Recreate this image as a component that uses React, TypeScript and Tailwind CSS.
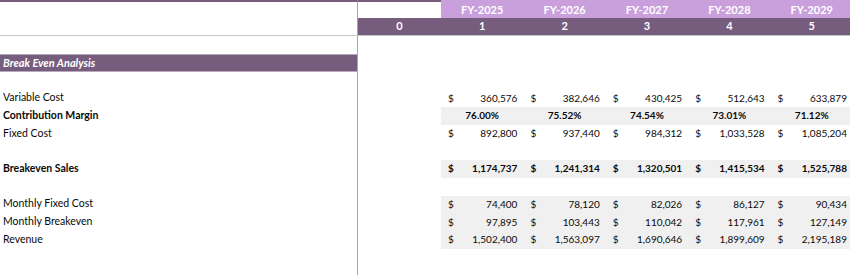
const years = ["FY-2025", "FY-2026", "FY-2027", "FY-2028", "FY-2029"];

type Row =
  | { kind: "blank" }
  | { kind: "money"; label: string; values: string[]; bold?: boolean; shade?: boolean }
  | { kind: "pct"; label: string; values: string[] };

const rows: Row[] = [
  { kind: "blank" },
  { kind: "money", label: "Variable Cost", values: ["360,576", "382,646", "430,425", "512,643", "633,879"] },
  { kind: "pct", label: "Contribution Margin", values: ["76.00%", "75.52%", "74.54%", "73.01%", "71.12%"] },
  { kind: "money", label: "Fixed Cost", values: ["892,800", "937,440", "984,312", "1,033,528", "1,085,204"] },
  { kind: "blank" },
  {
    kind: "money",
    label: "Breakeven Sales",
    values: ["1,174,737", "1,241,314", "1,320,501", "1,415,534", "1,525,788"],
    bold: true,
    shade: true,
  },
  { kind: "blank" },
  { kind: "money", label: "Monthly Fixed Cost", values: ["74,400", "78,120", "82,026", "86,127", "90,434"], shade: true },
  { kind: "money", label: "Monthly Breakeven", values: ["97,895", "103,443", "110,042", "117,961", "127,149"], shade: true },
  { kind: "money", label: "Revenue", values: ["1,502,400", "1,563,097", "1,690,646", "1,899,609", "2,195,189"], shade: true },
  { kind: "blank" },
  { kind: "blank" },
];

const grid = "grid grid-cols-[358px_83px_repeat(5,82.4px)] h-[17.7px]";

export default function App() {
  return (
    <div className="w-[850px] h-[275px] overflow-hidden bg-white text-[10.5px] text-[#0a0a0a] font-['Lato','Liberation_Sans',sans-serif]">
      {/* year header */}
      <div className={grid + " h-[18px]"}>
        <div className="border-t-2 border-t-[#765c7d] border-r border-r-[#a6a6a6]" />
        <div className="border-t-2 border-t-[#765c7d]" />
        {years.map((y) => (
          <div key={y} className="bg-[#c9a0dc] text-white text-[11px] font-bold flex items-center justify-center pt-[2px]">
            {y}
          </div>
        ))}
      </div>
      {/* period header */}
      <div className={grid + " h-[18px] border-b border-b-[#c8c8c8]"}>
        <div className="border-r border-r-[#a6a6a6]" />
        {[0, 1, 2, 3, 4, 5].map((n) => (
          <div key={n} className="bg-[#765c7d] text-white text-[11px] font-bold flex items-center justify-center">
            {n}
          </div>
        ))}
      </div>
      <div className={grid}>
        <div className="border-r border-r-[#a6a6a6]" />
      </div>
      {/* section bar */}
      <div className={grid + " h-[18px]"}>
        <div className="bg-[#765c7d] border-r border-r-[#a6a6a6] border-y border-y-[#b8aabb] text-white text-[11px] font-bold italic flex items-center pl-[3px]">
          Break Even Analysis
        </div>
      </div>
      {rows.map((r, i) => (
        <div key={i} className={grid}>
          <div
            className={
              "border-r border-r-[#a6a6a6] flex items-center pl-[3px] " +
              (r.kind !== "blank" && (r.kind === "pct" || r.bold) ? "font-bold" : "")
            }
          >
            {r.kind !== "blank" ? r.label : ""}
          </div>
          <div />
          {r.kind === "money" &&
            r.values.map((v, j) => (
              <div
                key={j}
                className={
                  "flex items-center justify-between pl-[7px] pr-[6px] text-[10px] " +
                  (r.shade ? "bg-[#f0f0f0] " : "") +
                  (r.bold ? "font-bold" : "")
                }
              >
                <span>$</span>
                <span>{v}</span>
              </div>
            ))}
          {r.kind === "pct" &&
            r.values.map((v, j) => (
              <div key={j} className="bg-[#f0f0f0] font-bold text-[10px] flex items-center justify-center">
                {v}
              </div>
            ))}
        </div>
      ))}
    </div>
  );
}
